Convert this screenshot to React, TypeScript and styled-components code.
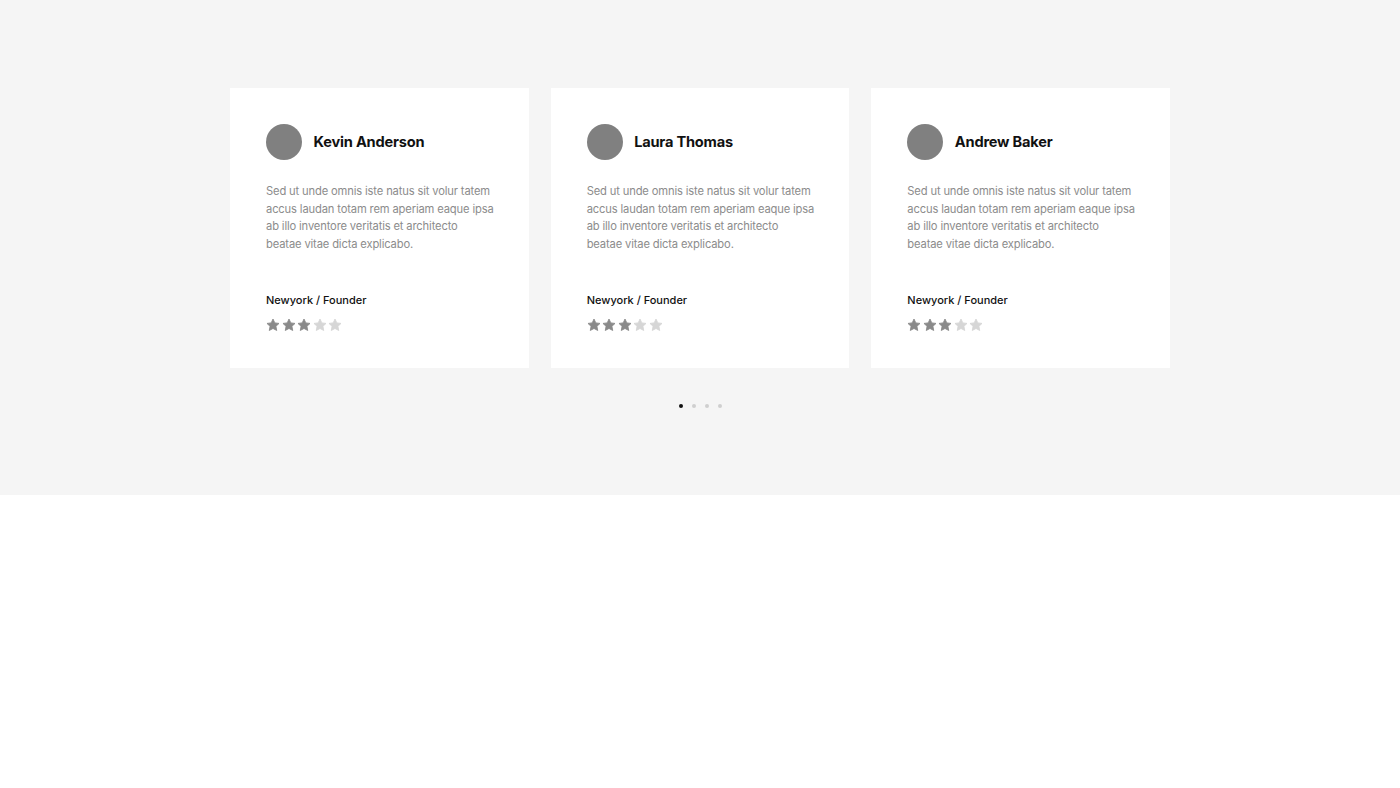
import React from "react";
import styled, { createGlobalStyle } from "styled-components";

const GlobalStyle = createGlobalStyle`
  html, body {
    margin: 0;
    padding: 0;
    background: #fff;
    font-family: Inter, "Noto Sans", sans-serif;
  }
`;

const Section = styled.section`
  background: #f5f5f5;
  height: 495px;
  padding-top: 88px;
  box-sizing: border-box;
`;

const Slider = styled.div`
  width: 940px;
  margin: 0 auto;
  display: grid;
  grid-template-columns: repeat(3, 1fr);
  gap: 22px;
`;

const Card = styled.div`
  background: #fff;
  height: 280px;
  box-sizing: border-box;
  padding: 36px 30px 0 36px;
`;

const Head = styled.div`
  display: flex;
  align-items: center;
  gap: 11.5px;
`;

const Avatar = styled.div`
  width: 36px;
  height: 36px;
  border-radius: 50%;
  background: #808080;
  flex-shrink: 0;
`;

const Name = styled.div`
  font-size: 14.6px;
  font-weight: 700;
  color: #111;
  letter-spacing: -0.2px;
`;

const Quote = styled.p`
  margin: 23px 0 0 0;
  width: 229.5px;
  font-size: 11.2px;
  line-height: 17.6px;
  letter-spacing: -0.15px;
  color: #8c8c8c;
  height: 87px;
`;

const Role = styled.div`
  margin-top: 23px;
  font-size: 11px;
  font-weight: 500;
  color: #111;
`;

const Stars = styled.div`
  display: flex;
  gap: 1.5px;
  margin-top: 11px;
`;

const Dots = styled.div`
  display: flex;
  justify-content: center;
  gap: 9px;
  margin-top: 36px;
`;

const Dot = styled.span<{ $active?: boolean }>`
  width: 4px;
  height: 4px;
  border-radius: 50%;
  background: ${(p) => (p.$active ? "#111" : "#cfcfcf")};
`;

const Star = ({ on }: { on: boolean }) => (
  <svg width="14" height="14" viewBox="0 0 24 24">
    <path
      d="M12 1.8l3.1 6.6 7.2.9-5.3 5 1.4 7.1L12 17.9l-6.4 3.5 1.4-7.1-5.3-5 7.2-.9z"
      fill={on ? "#8a8a8a" : "#d6d6d6"}
      stroke={on ? "#8a8a8a" : "#d6d6d6"}
      strokeWidth="1.5"
      strokeLinejoin="round"
    />
  </svg>
);

const people = ["Kevin Anderson", "Laura Thomas", "Andrew Baker"];

export default function App() {
  return (
    <>
      <GlobalStyle />
      <Section>
        <Slider>
          {people.map((name) => (
            <Card key={name}>
              <Head>
                <Avatar />
                <Name>{name}</Name>
              </Head>
              <Quote>
                Sed ut unde omnis iste natus sit volur tatem accus laudan totam rem
                aperiam eaque ipsa ab illo inventore veritatis et architecto beatae
                vitae dicta explicabo.
              </Quote>
              <Role>Newyork / Founder</Role>
              <Stars>
                {[0, 1, 2, 3, 4].map((i) => (
                  <Star key={i} on={i < 3} />
                ))}
              </Stars>
            </Card>
          ))}
        </Slider>
        <Dots>
          {[0, 1, 2, 3].map((i) => (
            <Dot key={i} $active={i === 0} />
          ))}
        </Dots>
      </Section>
    </>
  );
}
